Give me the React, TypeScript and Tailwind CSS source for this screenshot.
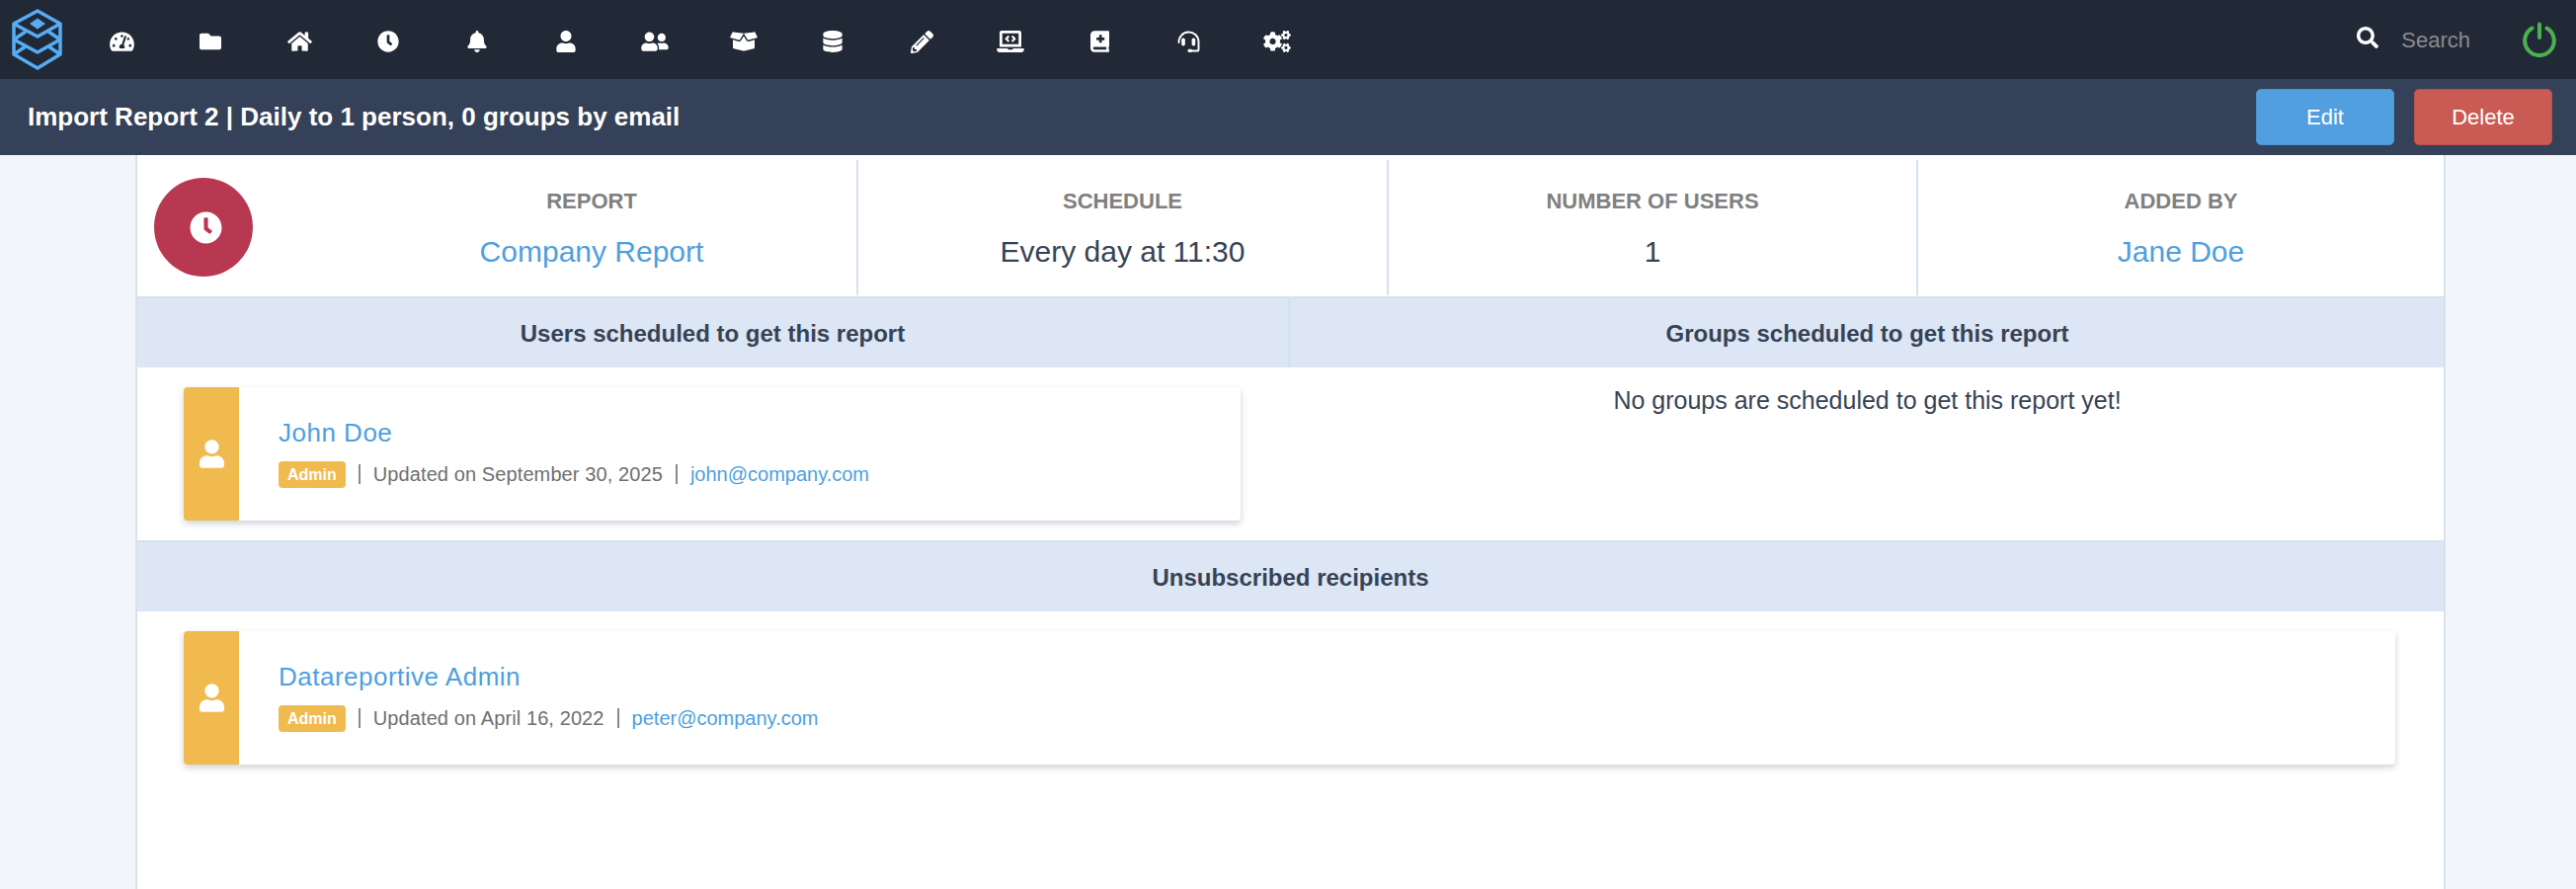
import {
  FaTachometerAlt,
  FaFolder,
  FaHome,
  FaClock,
  FaBell,
  FaUser,
  FaUserFriends,
  FaBoxOpen,
  FaDatabase,
  FaPencilAlt,
  FaLaptopCode,
  FaBookMedical,
  FaCogs,
  FaSearch,
} from "react-icons/fa";
import type { ReactNode } from "react";

const Headset = () => (
  <svg viewBox="0 0 23 22" className="w-[23px] h-[22px]" fill="none" stroke="white" strokeWidth="1.9" strokeLinecap="round">
    <path d="M1.5 12A10 10 0 0 1 21.5 11V19.5A1 1 0 0 1 20.5 20.5H13" />
    <rect x="4.2" y="7.5" width="3.6" height="8" rx="1.8" fill="white" stroke="none" />
    <rect x="14.6" y="7.5" width="3.6" height="8" rx="1.8" fill="white" stroke="none" />
    <rect x="10.5" y="18.8" width="4.5" height="3.2" rx="1.4" fill="white" stroke="none" />
  </svg>
);

const Logo = () => (
  <svg viewBox="10 8 56 64" className="w-[56px] h-[64px]" fill="none" stroke="#55adf5" strokeWidth="3.5" strokeLinejoin="round">
    <path d="M38 11 L61 24 V55 L38 69 L14 55 V24 Z" />
    <path d="M14 24 L38 37 L61 24" />
    <path d="M14 40 L38 53 L61 40" />
    <path d="M14 40 L26 32 M61 40 L49 32 M14 55 L26 47 M61 55 L49 47" />
    <path d="M38 18.5 L46 24 L38 29.5 L30 24 Z" fill="#55adf5" stroke="none" />
  </svg>
);

const NAV_ICONS: { id: string; icon: ReactNode }[] = [
  { id: "dashboard", icon: <FaTachometerAlt className="w-[25px] h-[22px]" /> },
  { id: "folder", icon: <FaFolder className="w-[22px] h-[22px]" /> },
  { id: "home", icon: <FaHome className="w-[25px] h-[22px]" /> },
  { id: "clock", icon: <FaClock className="w-[22px] h-[22px]" /> },
  { id: "bell", icon: <FaBell className="w-[20px] h-[22px]" /> },
  { id: "user", icon: <FaUser className="w-[20px] h-[22px]" /> },
  { id: "users", icon: <FaUserFriends className="w-[28px] h-[22px]" /> },
  { id: "box", icon: <FaBoxOpen className="w-[28px] h-[22px]" /> },
  { id: "database", icon: <FaDatabase className="w-[20px] h-[22px]" /> },
  { id: "pencil", icon: <FaPencilAlt className="w-[23px] h-[23px]" /> },
  { id: "laptop", icon: <FaLaptopCode className="w-[28px] h-[22px]" /> },
  { id: "book", icon: <FaBookMedical className="w-[19px] h-[22px]" /> },
  { id: "headset", icon: <Headset /> },
  { id: "cogs", icon: <FaCogs className="w-[28px] h-[22px]" /> },
];

const Stat = ({ label, value, link, width }: { label: string; value: string; link?: boolean; width: string }) => (
  <div className={`${width} h-[137px] flex flex-col items-center pt-[29px] border-r-2 border-[#d6e2ec] last:border-r-0`}>
    <div className="text-[22px] leading-[26px] font-bold text-[#808080]">{label}</div>
    <div className={`mt-[20px] text-[30px] leading-[36px] ${link ? "text-[#4e9fe0]" : "text-[#374355]"}`}>{value}</div>
  </div>
);

const SectionHead = ({ children, className = "" }: { children: ReactNode; className?: string }) => (
  <div className={`h-[72px] bg-[#dce6f4] border-t-2 border-[#d6e2ec] pt-[2px] flex items-center justify-center text-[24px] font-bold text-[#374355] ${className}`}>
    {children}
  </div>
);

const Divider = () => <span className="mx-[13px] w-[2px] h-[20px] bg-[#8a8a8a]" />;

const PersonCard = ({ name, updated, email }: { name: string; updated: string; email: string }) => (
  <div className="h-[135px] flex bg-white rounded-[4px] shadow-[0_3px_6px_rgba(60,70,100,0.25)] overflow-hidden">
    <div className="w-[56px] shrink-0 bg-[#f1ba4f] flex items-center justify-center text-white">
      <FaUser className="w-[25px] h-[29px]" />
    </div>
    <div className="pl-[40px] pt-[28px]">
      <div className="text-[26px] leading-[36px] text-[#4e9fe0] tracking-[0.5px]">{name}</div>
      <div className="mt-[10px] flex items-center text-[#6f6f6f] text-[20px] leading-[28px]">
        <span className="bg-[#f1ba4f] text-white font-bold text-[16px] leading-[27px] h-[27px] px-[9px] rounded-[4px]">Admin</span>
        <Divider />
        <span className="tracking-[0.1px]">{updated}</span>
        <Divider />
        <span className="text-[#4e9fe0]">{email}</span>
      </div>
    </div>
  </div>
);

export default function App() {
  return (
    <div className="min-h-[900px] bg-[#f2f6fb] font-['Liberation_Sans',Arial,sans-serif]">
      <div className="h-[80px] bg-[#222936] flex items-center pl-[10px] pr-[20px]">
        <Logo />
        <div className="flex items-center ml-[12px] mt-[4px] text-white">
          {NAV_ICONS.map((n) => (
            <div key={n.id} className="w-[90px] h-[40px] flex items-center justify-center">
              {n.icon}
            </div>
          ))}
        </div>
        <div className="ml-auto flex items-center">
          <FaSearch className="text-white w-[22px] h-[22px] -mt-[5px]" />
          <span className="ml-[23px] text-[22px] text-[#888b91]">Search</span>
          <svg viewBox="0 0 34 36" className="ml-[53px] w-[34px] h-[36px]" fill="none" stroke="#4caf50" strokeWidth="4" strokeLinecap="round">
            <path d="M9.5 6.5A14.8 14.8 0 1 0 24.5 6.5" />
            <path d="M17 2.5V16" />
          </svg>
        </div>
      </div>

      <div className="h-[77px] bg-[#344158] flex items-center pl-[28px] pr-[24px]">
        <h1 className="text-[26px] font-bold text-white">Import Report 2 | Daily to 1 person, 0 groups by email</h1>
        <div className="ml-auto flex gap-[20px]">
          <button className="w-[140px] h-[57px] bg-[#529fe0] border border-[#4a94d4] rounded-[5px] text-white text-[22px]">Edit</button>
          <button className="w-[140px] h-[57px] bg-[#c95b54] border border-[#bd4f49] rounded-[5px] text-white text-[22px]">Delete</button>
        </div>
      </div>

      <div className="ml-[137px] w-[2339px] h-[743px] bg-white border-x-2 border-[#d6e2ec]">
        <div className="h-[143px] flex items-start pt-[5px]">
          <div className="w-[192px] shrink-0 pl-[17px] pt-[18px]">
            <div className="w-[100px] h-[100px] rounded-full bg-[#b93851] flex items-center justify-center pl-[5px] text-white">
              <FaClock className="w-[33px] h-[33px]" />
            </div>
          </div>
          <Stat label="REPORT" value="Company Report" link width="w-[538px]" />
          <Stat label="SCHEDULE" value="Every day at 11:30" width="w-[537px]" />
          <Stat label="NUMBER OF USERS" value="1" width="w-[536px]" />
          <Stat label="ADDED BY" value="Jane Doe" link width="flex-1" />
        </div>

        <div className="flex">
          <SectionHead className="w-[1168px] border-r-[3px] border-r-[#d6e2ec]">Users scheduled to get this report</SectionHead>
          <SectionHead className="flex-1">Groups scheduled to get this report</SectionHead>
        </div>
        <div className="flex h-[175px]">
          <div className="w-[1168px] pl-[47px] pr-[51px] pt-[20px]">
            <PersonCard name="John Doe" updated="Updated on September 30, 2025" email="john@company.com" />
          </div>
          <div className="flex-1 pt-[18px] text-center text-[25px] leading-[30px] text-[#374355]">
            No groups are scheduled to get this report yet!
          </div>
        </div>

        <SectionHead>Unsubscribed recipients</SectionHead>
        <div className="pl-[47px] pr-[49px] pt-[20px]">
          <PersonCard name="Datareportive Admin" updated="Updated on April 16, 2022" email="peter@company.com" />
        </div>
      </div>
    </div>
  );
}
